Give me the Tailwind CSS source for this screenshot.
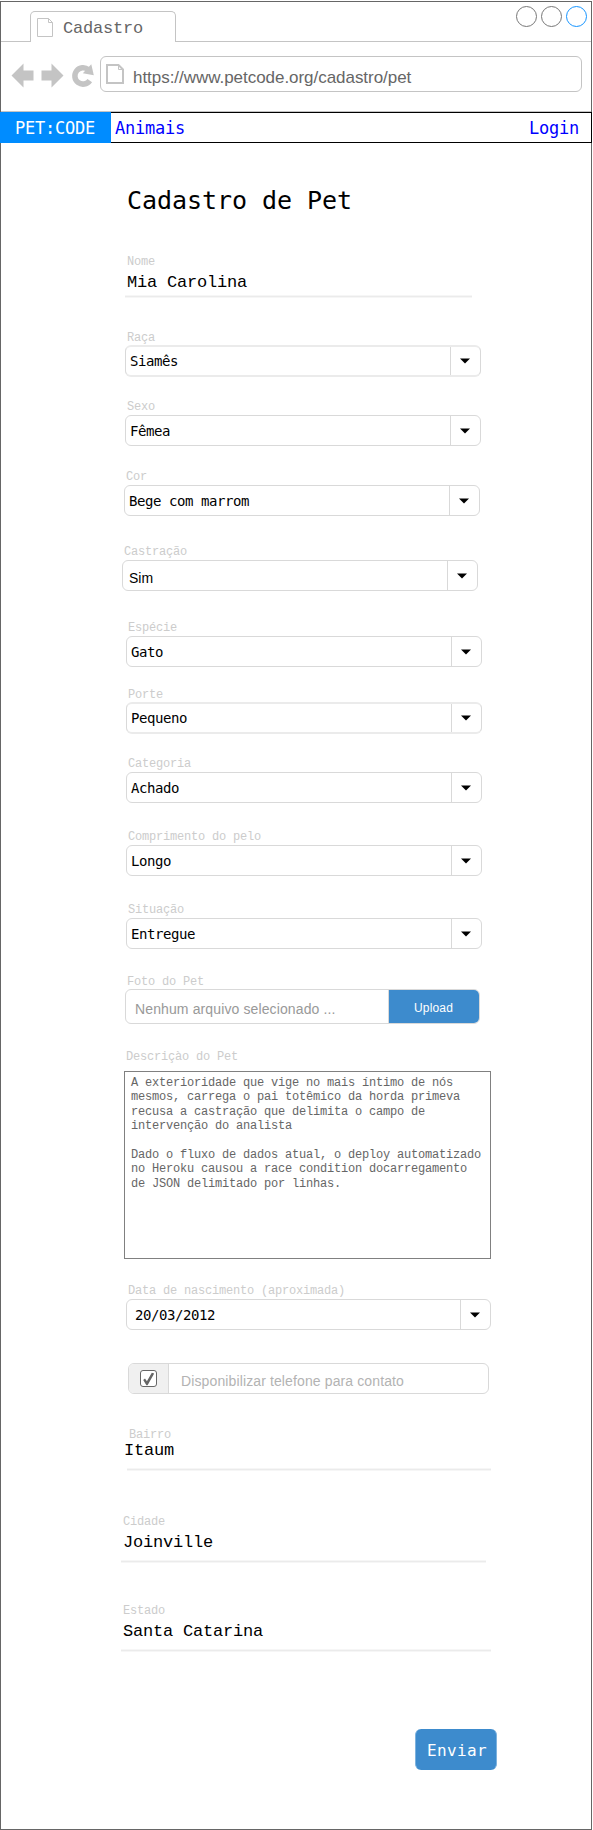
<!DOCTYPE html>
<html lang="pt-BR">
<head>
<meta charset="utf-8">
<title>Cadastro</title>
<script src="https://cdn.jsdelivr.net/npm/@tailwindcss/browser@4"></script>
</head>
<body class="bg-white">
<svg class="hidden">
  <symbol id="caret" viewBox="0 0 10 6"><path d="M0 .5H10L5 5.5Z" fill="#000"/></symbol>
  <symbol id="page" viewBox="0 0 16 19"><path d="M.5.5H11.5L15.5 4.5V18.5H.5Z M11.5.5V4.5H15.5" fill="none" stroke="#c4c4c4"/></symbol>
</svg>
<div class="w-[592px] h-[1830px] pt-px">
<div class="h-[1829px] border border-[#666] flex flex-col font-['Liberation_Mono',monospace]">

  <!-- Tab strip -->
  <header class="flex h-[40px] shrink-0">
    <div class="w-[29px] border-b border-[#c4c4c4]"></div>
    <div class="mt-[9px] w-[146px] h-[31px] flex items-center border border-b-0 border-[#c4c4c4] rounded-t-[5px] pl-[6px]">
      <svg class="w-[16px] h-[19px] mt-px"><use href="#page"/></svg>
      <span class="ml-[10px] mt-[3px] text-[17px] leading-5 tracking-[-0.2px] text-[#666]">Cadastro</span>
    </div>
    <div class="flex-1 border-b border-[#c4c4c4] flex justify-end gap-[4px] pt-[4px] pr-[4px]">
      <div class="size-[21px] rounded-full border border-[#777]"></div>
      <div class="size-[21px] rounded-full border border-[#777]"></div>
      <div class="size-[21px] rounded-full border border-[#1594ff]"></div>
    </div>
  </header>

  <!-- Toolbar -->
  <div class="h-[70px] shrink-0 flex items-start border-b border-[#c4c4c4] pt-[14px]">
    <svg class="ml-[10px] mt-[7px] w-[84px] h-[26px]" viewBox="11 63 84 26" fill="#c4c4c4">
      <path d="M11.5 75.5 23.5 63.5V70.5H33.5V80.5H23.5V87.5Z"/>
      <path d="M63.5 75.5 51.5 63.5V70.5H41.5V80.5H51.5V87.5Z"/>
      <path d="M89.8 80.6A8.2 8.2 0 1 1 88.3 69.6" fill="none" stroke="#c4c4c4" stroke-width="5.5"/>
      <path d="M91.3 64.3 93.8 75.2 82.8 73.2Z"/>
    </svg>
    <div class="ml-[5px] w-[482px] h-[36px] flex items-center border border-[#c4c4c4] rounded-[6px] pl-[5px]">
      <svg class="w-[18px] h-[20px]" viewBox="0 0 18 20" fill="none" stroke="#c4c4c4" stroke-width="2"><path d="M1 1H12.5L17 5.5V19H1Z"/><path d="M12.5 1V5.5H17" stroke-width="1"/></svg>
      <span class="ml-[9px] mt-[7px] text-[17px] leading-5 tracking-[-0.04px] text-[#666] font-['Liberation_Sans',sans-serif]">https://www.petcode.org/cadastro/pet</span>
    </div>
  </div>

  <!-- Site navigation -->
  <nav class="-mx-px h-[31px] shrink-0 flex items-center border border-l-0 border-black font-['DejaVu_Sans_Mono',monospace] text-[17px] tracking-[-0.23px] text-[#0000ff]">
    <div class="-my-px w-[111px] h-[31px] bg-[#008cff] text-white pl-[15px] pt-px leading-[31px]">PET:CODE</div>
    <a class="ml-[4px] pt-[2px]">Animais</a>
    <a class="ml-auto mr-[12px] pt-[2px]">Login</a>
  </nav>

  <main class="pl-[121px] flex flex-col items-start">
    <h1 class="ml-[5px] mt-[43px] font-['DejaVu_Sans_Mono',monospace] text-[25px] leading-[30px] tracking-[-0.05px]">Cadastro de Pet</h1>

    <div class="mt-[39px] ml-[3px]">
      <div class="pl-[2px] h-[14px] text-[12px] leading-[14px] tracking-[-0.2px] text-[#ccc]">Nome</div>
      <div class="pl-[2px] mt-[4px] h-[19px] text-[17px] leading-5 tracking-[-0.2px]">Mia Carolina</div>
      <div class="mt-[3px] w-[347px] h-[3px] bg-[#ebebeb] border-y border-[#f6f6f6]"></div>
    </div>

    <div class="mt-[33px] ml-[3px]">
      <div class="pl-[2px] h-[14px] text-[12px] leading-[14px] tracking-[-0.2px] text-[#ccc]">Raça</div>
      <div class="w-[356px] h-[32px] flex border border-y-2 border-x-[#d9d9d9] border-y-[#ebebeb] rounded-[6px]">
        <div class="flex-1 pl-[4px] pb-px flex items-center font-['DejaVu_Sans_Mono',monospace] text-[14px] leading-4 tracking-[-0.43px]">Siamês</div>
        <div class="w-[30px] border-l border-[#d9d9d9] flex items-center justify-center pr-px"><svg class="w-[10px] h-[6px]"><use href="#caret"/></svg></div>
      </div>
    </div>

    <div class="mt-[23px] ml-[3px]">
      <div class="pl-[2px] h-[15px] text-[12px] leading-[14px] tracking-[-0.2px] text-[#ccc]">Sexo</div>
      <div class="w-[356px] h-[31px] flex border border-[#d9d9d9] rounded-[6px]">
        <div class="flex-1 pl-[4px] pt-px flex items-center font-['DejaVu_Sans_Mono',monospace] text-[14px] leading-4 tracking-[-0.43px]">Fêmea</div>
        <div class="w-[30px] border-l border-[#d9d9d9] flex items-center justify-center pr-px"><svg class="w-[10px] h-[6px]"><use href="#caret"/></svg></div>
      </div>
    </div>

    <div class="mt-[24px] ml-[2px]">
      <div class="pl-[2px] h-[15px] text-[12px] leading-[14px] tracking-[-0.2px] text-[#ccc]">Cor</div>
      <div class="w-[356px] h-[31px] flex border border-[#d9d9d9] rounded-[6px]">
        <div class="flex-1 pl-[4px] pt-px flex items-center font-['DejaVu_Sans_Mono',monospace] text-[14px] leading-4 tracking-[-0.43px]">Bege com marrom</div>
        <div class="w-[30px] border-l border-[#d9d9d9] flex items-center justify-center pr-px"><svg class="w-[10px] h-[6px]"><use href="#caret"/></svg></div>
      </div>
    </div>

    <div class="mt-[29px]">
      <div class="pl-[2px] h-[15px] text-[12px] leading-[14px] tracking-[-0.2px] text-[#ccc]">Castração</div>
      <div class="w-[356px] h-[31px] flex border border-[#d9d9d9] rounded-[6px]">
        <div class="flex-1 pl-[6px] pt-[5px] flex items-center font-['Liberation_Sans',sans-serif] text-[14px] leading-4">Sim</div>
        <div class="w-[30px] border-l border-[#d9d9d9] flex items-center justify-center pr-px"><svg class="w-[10px] h-[6px]"><use href="#caret"/></svg></div>
      </div>
    </div>

    <div class="mt-[30px] ml-[4px]">
      <div class="pl-[2px] h-[15px] text-[12px] leading-[14px] tracking-[-0.2px] text-[#ccc]">Espécie</div>
      <div class="w-[356px] h-[31px] flex border border-[#d9d9d9] rounded-[6px]">
        <div class="flex-1 pl-[4px] pt-px flex items-center font-['DejaVu_Sans_Mono',monospace] text-[14px] leading-4 tracking-[-0.43px]">Gato</div>
        <div class="w-[30px] border-l border-[#d9d9d9] flex items-center justify-center pr-px"><svg class="w-[10px] h-[6px]"><use href="#caret"/></svg></div>
      </div>
    </div>

    <div class="mt-[21px] ml-[4px]">
      <div class="pl-[2px] h-[14px] text-[12px] leading-[14px] tracking-[-0.2px] text-[#ccc]">Porte</div>
      <div class="w-[356px] h-[32px] flex border border-y-2 border-x-[#d9d9d9] border-y-[#ebebeb] rounded-[6px]">
        <div class="flex-1 pl-[4px] pb-px flex items-center font-['DejaVu_Sans_Mono',monospace] text-[14px] leading-4 tracking-[-0.43px]">Pequeno</div>
        <div class="w-[30px] border-l border-[#d9d9d9] flex items-center justify-center pr-px"><svg class="w-[10px] h-[6px]"><use href="#caret"/></svg></div>
      </div>
    </div>

    <div class="mt-[23px] ml-[4px]">
      <div class="pl-[2px] h-[15px] text-[12px] leading-[14px] tracking-[-0.2px] text-[#ccc]">Categoria</div>
      <div class="w-[356px] h-[31px] flex border border-[#d9d9d9] rounded-[6px]">
        <div class="flex-1 pl-[4px] pt-px flex items-center font-['DejaVu_Sans_Mono',monospace] text-[14px] leading-4 tracking-[-0.43px]">Achado</div>
        <div class="w-[30px] border-l border-[#d9d9d9] flex items-center justify-center pr-px"><svg class="w-[10px] h-[6px]"><use href="#caret"/></svg></div>
      </div>
    </div>

    <div class="mt-[27px] ml-[4px]">
      <div class="pl-[2px] h-[15px] text-[12px] leading-[14px] tracking-[-0.2px] text-[#ccc]">Comprimento do pelo</div>
      <div class="w-[356px] h-[31px] flex border border-[#d9d9d9] rounded-[6px]">
        <div class="flex-1 pl-[4px] pt-px flex items-center font-['DejaVu_Sans_Mono',monospace] text-[14px] leading-4 tracking-[-0.43px]">Longo</div>
        <div class="w-[30px] border-l border-[#d9d9d9] flex items-center justify-center pr-px"><svg class="w-[10px] h-[6px]"><use href="#caret"/></svg></div>
      </div>
    </div>

    <div class="mt-[27px] ml-[4px]">
      <div class="pl-[2px] h-[15px] text-[12px] leading-[14px] tracking-[-0.2px] text-[#ccc]">Situação</div>
      <div class="w-[356px] h-[31px] flex border border-[#d9d9d9] rounded-[6px]">
        <div class="flex-1 pl-[4px] pt-px flex items-center font-['DejaVu_Sans_Mono',monospace] text-[14px] leading-4 tracking-[-0.43px]">Entregue</div>
        <div class="w-[30px] border-l border-[#d9d9d9] flex items-center justify-center pr-px"><svg class="w-[10px] h-[6px]"><use href="#caret"/></svg></div>
      </div>
    </div>

    <div class="mt-[26px] ml-[3px] font-['Liberation_Sans',sans-serif]">
      <div class="pl-[2px] h-[14px] font-['Liberation_Mono',monospace] text-[12px] leading-[14px] tracking-[-0.2px] text-[#ccc]">Foto do Pet</div>
      <div class="w-[355px] h-[35px] flex border border-[#d9d9d9] rounded-[6px] overflow-hidden">
        <div class="flex-1 pl-[9px] pt-[4px] flex items-center text-[14px] leading-4 tracking-[0.12px] text-[#999]">Nenhum arquivo selecionado ...</div>
        <div class="w-[91px] border-l border-[#d9d9d9] bg-[#3d8bcd] text-white text-[12px] tracking-[0.15px] flex items-center justify-center pt-[2px] pr-px">Upload</div>
      </div>
    </div>

    <div class="mt-[26px] ml-[2px]">
      <div class="pl-[2px] h-[21px] text-[12px] leading-[14px] tracking-[-0.2px] text-[#ccc]">Descriçào do Pet</div>
      <div class="w-[367px] h-[188px] border border-[#808080] pl-[6px] pt-[4px] text-[12px] leading-[14.4px] tracking-[-0.2px] text-[#666] whitespace-pre">A exterioridade que vige no mais íntimo de nós
mesmos, carrega o pai totêmico da horda primeva
recusa a castração que delimita o campo de
intervenção do analista

Dado o fluxo de dados atual, o deploy automatizado
no Heroku causou a race condition docarregamento
de JSON delimitado por linhas.</div>
    </div>

    <div class="mt-[25px] ml-[4px]">
      <div class="pl-[2px] h-[15px] text-[12px] leading-[14px] tracking-[-0.2px] text-[#ccc]">Data de nascimento (aproximada)</div>
      <div class="w-[365px] h-[31px] flex border border-[#d9d9d9] rounded-[6px]">
        <div class="flex-1 pl-[8px] pt-px flex items-center font-['DejaVu_Sans_Mono',monospace] text-[14px] leading-4 tracking-[-0.43px]">20/03/2012</div>
        <div class="w-[30px] border-l border-[#d9d9d9] flex items-center justify-center pr-px"><svg class="w-[10px] h-[6px]"><use href="#caret"/></svg></div>
      </div>
    </div>

    <div class="mt-[33px] ml-[6px] w-[361px] h-[31px] flex border border-[#d9d9d9] rounded-[6px] overflow-hidden">
      <div class="w-[40px] bg-[#f0f0f0] border-r border-[#d9d9d9] flex items-center justify-center">
        <svg class="w-[17px] h-[17px]" viewBox="0 0 17 17"><rect x=".5" y=".5" width="16" height="16" rx="2.5" fill="#fff" stroke="#666"/><path d="M3.2 10 5 8.6 6.9 11.2 11.8 2.8 14.2 3.6 7.6 15.2H6.4Z" fill="#666"/></svg>
      </div>
      <div class="pl-[12px] pt-[4px] flex items-center font-['Liberation_Sans',sans-serif] text-[14px] leading-4 tracking-[0.12px] text-[#b3b3b3]">Disponibilizar telefone para contato</div>
    </div>

    <div class="mt-[34px] ml-[3px]">
      <div class="pl-[4px] h-[14px] text-[12px] leading-[14px] tracking-[-0.2px] text-[#ccc]">Bairro</div>
      <div class="-mt-px -ml-px h-[19px] text-[17px] leading-5 tracking-[-0.2px]">Itaum</div>
      <div class="mt-[8px] ml-[2px] w-[364px] h-[3px] bg-[#ebebeb] border-y border-[#f6f6f6]"></div>
    </div>

    <div class="mt-[44px]">
      <div class="pl-[1px] h-[14px] text-[12px] leading-[14px] tracking-[-0.2px] text-[#ccc]">Cidade</div>
      <div class="pl-[1px] mt-[4px] h-[19px] text-[17px] leading-5 tracking-[-0.2px]">Joinville</div>
      <div class="mt-[8px] w-[365px] -ml-px h-[3px] bg-[#ebebeb] border-y border-[#f6f6f6]"></div>
    </div>

    <div class="mt-[41px]">
      <div class="pl-[1px] h-[14px] text-[12px] leading-[14px] tracking-[-0.2px] text-[#ccc]">Estado</div>
      <div class="pl-[1px] mt-[4px] h-[19px] text-[17px] leading-5 tracking-[-0.2px]">Santa Catarina</div>
      <div class="mt-[8px] w-[370px] -ml-px h-[3px] bg-[#ebebeb] border-y border-[#f6f6f6]"></div>
    </div>

    <button class="mt-[77px] ml-[293px] w-[82px] h-[41px] rounded-[6px] bg-[#3d8bcd] border border-y-0 border-[#7db2de] text-left pl-[11px] pt-[2px] font-['DejaVu_Sans_Mono',monospace] text-[16px] tracking-[0.37px] text-white">Enviar</button>
  </main>
</div>
</div>
</body>
</html>
